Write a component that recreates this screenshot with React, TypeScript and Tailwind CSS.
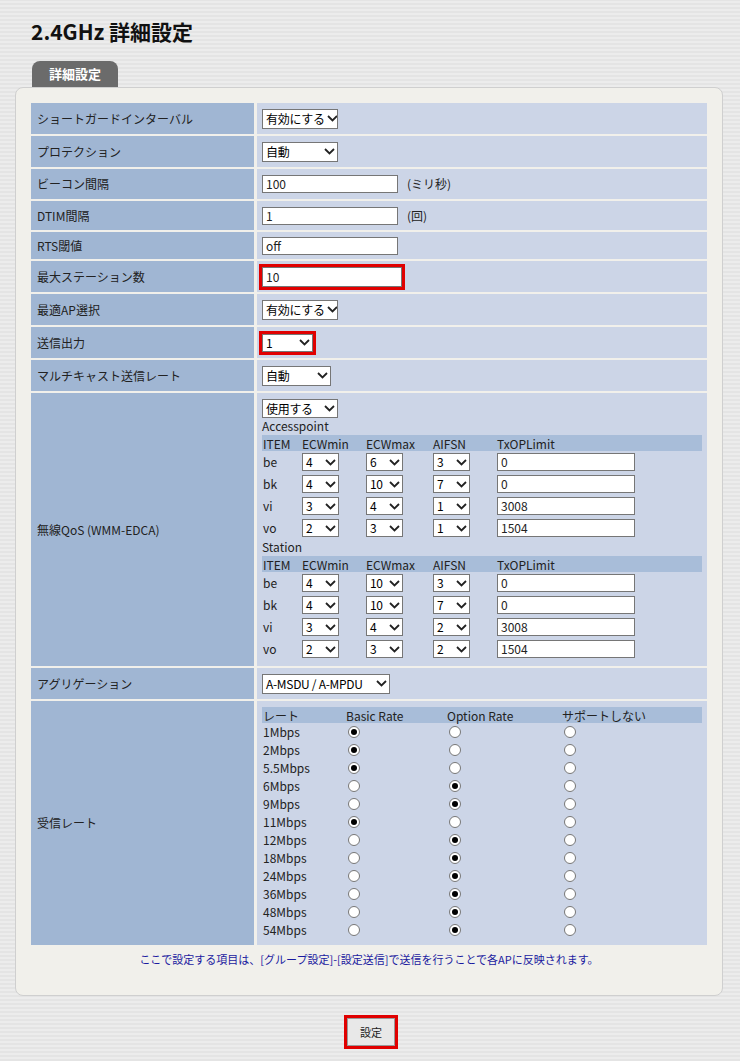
import React from "react";

const F = { fontFamily: '"Noto Sans CJK JP", "Liberation Sans", sans-serif' };

function Sel({ v, w, h = 20 }: { v: string; w: number; h?: number }) {
  return (
    <div className="inline-flex items-center justify-between bg-white border border-[#767676] pl-[3px] pr-[2px] text-[12px] text-black whitespace-nowrap overflow-hidden tracking-[-0.3px]" style={{ width: w, height: h }}>
      <span>{v}</span>
      <svg className="shrink-0 ml-[2px]" width="11" height="7" viewBox="0 0 11 7"><path d="M1 1l4.5 4.5L10 1" stroke="#222" strokeWidth="1.8" fill="none" /></svg>
    </div>
  );
}
function Inp({ v, w = 136, h = 18 }: { v: string; w?: number; h?: number }) {
  return <div className="inline-flex items-center bg-white border border-[#767676] px-[3px] text-[12px]" style={{ width: w, height: h }}>{v}</div>;
}
function Radio({ on }: { on: boolean }) {
  return (
    <span className="inline-flex items-center justify-center w-[12px] h-[12px] rounded-full border border-[#777] bg-white align-middle">
      {on && <span className="w-[6px] h-[6px] rounded-full bg-black" />}
    </span>
  );
}

const ap = [["be", "4", "6", "3", "0"], ["bk", "4", "10", "7", "0"], ["vi", "3", "4", "1", "3008"], ["vo", "2", "3", "1", "1504"]];
const st = [["be", "4", "10", "3", "0"], ["bk", "4", "10", "7", "0"], ["vi", "3", "4", "2", "3008"], ["vo", "2", "3", "2", "1504"]];
const rates: [string, number][] = [["1Mbps", 0], ["2Mbps", 0], ["5.5Mbps", 0], ["6Mbps", 1], ["9Mbps", 1], ["11Mbps", 0], ["12Mbps", 1], ["18Mbps", 1], ["24Mbps", 1], ["36Mbps", 1], ["48Mbps", 1], ["54Mbps", 1]];

function Qos({ title, data }: { title: string; data: string[][] }) {
  return (
    <div>
      <div className="h-[16px] leading-[16px]">{title}</div>
      <div className="grid grid-cols-[38px_62px_65px_62px_203px] gap-x-[2px] bg-[#a8bdd9] h-[16px] items-center mt-[1px]">
        <span className="pl-[1px]">ITEM</span><span>ECWmin</span><span>ECWmax</span><span>AIFSN</span><span>TxOPLimit</span>
      </div>
      {data.map((r) => (
        <div key={r[0]} className="grid grid-cols-[38px_62px_65px_62px_203px] gap-x-[2px] h-[22px] items-center">
          <span className="pl-[1px]">{r[0]}</span>
          <span><Sel v={r[1]} w={37} h={18} /></span>
          <span><Sel v={r[2]} w={37} h={18} /></span>
          <span><Sel v={r[3]} w={37} h={18} /></span>
          <span><Inp v={r[4]} w={138} /></span>
        </div>
      ))}
    </div>
  );
}

function Row({ label, children, h = 31 }: { label: string; children: React.ReactNode; h?: number }) {
  return (
    <div className="grid grid-cols-[223px_450px] gap-x-[3px]">
      <div className="bg-[#a0b6d3] px-[6px] flex items-center text-[12px]" style={{ minHeight: h }}>{label}</div>
      <div className="bg-[#ccd5e7] px-[5px] flex items-center text-[12px]" style={{ minHeight: h }}>{children}</div>
    </div>
  );
}

export default function App() {
  return (
    <div style={F} className="w-[740px] h-[1061px] bg-[repeating-linear-gradient(0deg,#e4e4e4_0px,#e4e4e4_2px,#ececec_2px,#ececec_4px)] text-[#222]">
      <div className="pt-[17px] pl-[31px] text-[21px] font-bold text-[#111] leading-[28px]">2.4GHz 詳細設定</div>
      <div className="ml-[32px] mt-[16px] w-[86px] h-[26px] bg-[#6b6b6b] rounded-t-[8px] text-white font-bold text-[13px] flex items-center justify-center">詳細設定</div>
      <div className="mx-[15px] w-[708px] h-[909px] bg-[#f1f0eb] rounded-[8px] border border-[#cfcfcf] pt-[15px] px-[15px]">
        <div className="flex flex-col gap-y-[2px]">
          <Row label="ショートガードインターバル"><Sel v="有効にする" w={76} /></Row>
          <Row label="プロテクション"><Sel v="自動" w={76} /></Row>
          <Row label="ビーコン間隔" h={30}><Inp v="100" /><span className="ml-[9px]">(ミリ秒)</span></Row>
          <Row label="DTIM間隔" h={29}><Inp v="1" /><span className="ml-[9px]">(回)</span></Row>
          <Row label="RTS閾値" h={27}><Inp v="off" /></Row>
          <Row label="最大ステーション数"><div className="border-[3px] border-[#e00000] -ml-[3px] p-0"><Inp v="10" w={140} h={20} /></div></Row>
          <Row label="最適AP選択"><Sel v="有効にする" w={76} /></Row>
          <Row label="送信出力"><div className="border-[3px] border-[#e00000] -ml-[3px]"><Sel v="1" w={51} h={18} /></div></Row>
          <Row label="マルチキャスト送信レート"><Sel v="自動" w={69} /></Row>
          <Row label="無線QoS (WMM-EDCA)">
            <div className="py-[6px] w-full">
              <Sel v="使用する" w={76} h={19} />
              <Qos title="Accesspoint" data={ap} />
              <Qos title="Station" data={st} />
            </div>
          </Row>
          <Row label="アグリゲーション"><Sel v="A-MSDU / A-MPDU" w={128} /></Row>
          <Row label="受信レート">
            <div className="pt-[6px] pb-[6px] w-full">
              <div className="grid grid-cols-[82px_99px_113px_138px] gap-x-[2px] bg-[#a8bdd9] h-[16px] items-center">
                <span className="pl-[1px]">レート</span><span>Basic Rate</span><span>Option Rate</span><span>サポートしない</span>
              </div>
              {rates.map(([n, s]) => (
                <div key={n} className="grid grid-cols-[82px_99px_113px_138px] gap-x-[2px] h-[18px] items-center">
                  <span className="pl-[1px] leading-[14px]">{n}</span>
                  <span className="pl-[2px] flex items-center"><Radio on={s === 0} /></span>
                  <span className="pl-[2px] flex items-center"><Radio on={s === 1} /></span>
                  <span className="pl-[2px] flex items-center"><Radio on={false} /></span>
                </div>
              ))}
            </div>
          </Row>
        </div>
        <div className="text-center text-[11px] text-[#1a1aa0] mt-[6px]">ここで設定する項目は、[グループ設定]-[設定送信]で送信を行うことで各APに反映されます。</div>
      </div>
      <div className="flex justify-center mt-[19px]">
        <div className="border-[3px] border-[#e00000] ml-[2px]">
          <div className="w-[48px] h-[28px] bg-[#e8e8e8] border border-[#999] flex items-center justify-center text-[11px]">設定</div>
        </div>
      </div>
    </div>
  );
}
